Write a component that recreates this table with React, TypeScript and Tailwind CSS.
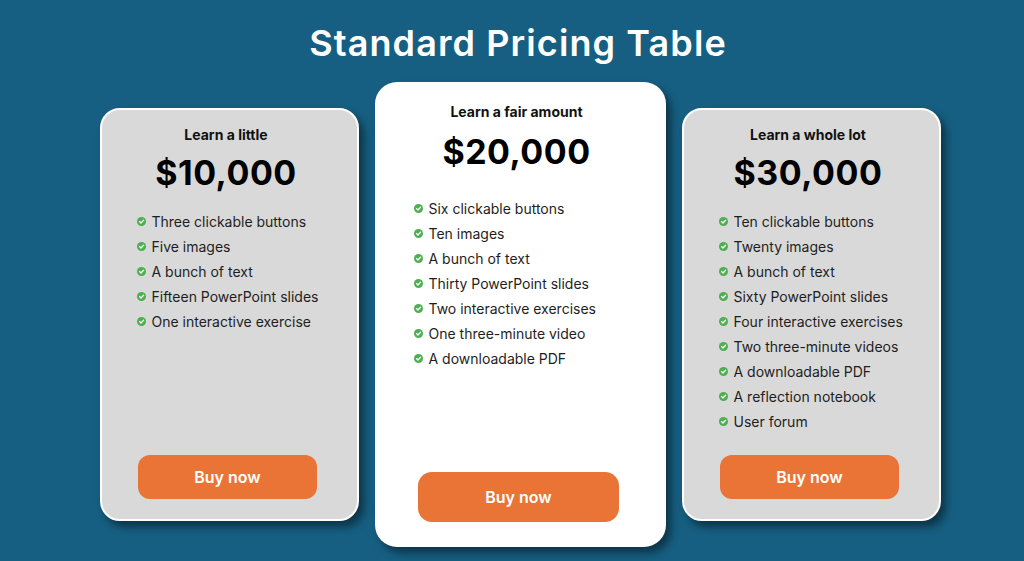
import React from "react";

const font = { fontFamily: "Inter, 'Noto Sans', sans-serif" };

function Check() {
  return (
    <svg width="9" height="9" viewBox="0 0 10 10" className="shrink-0">
      <circle cx="5" cy="5" r="5" fill="#4caf50" />
      <path d="M2.8 5.1 L4.4 6.6 L7.3 3.6" stroke="#fff" strokeWidth="1.5" fill="none" strokeLinecap="round" strokeLinejoin="round" />
    </svg>
  );
}

type Plan = { name: string; price: string; items: string[] };

const plans: Plan[] = [
  {
    name: "Learn a little",
    price: "$10,000",
    items: ["Three clickable buttons", "Five images", "A bunch of text", "Fifteen PowerPoint slides", "One interactive exercise"],
  },
  {
    name: "Learn a fair amount",
    price: "$20,000",
    items: [
      "Six clickable buttons",
      "Ten images",
      "A bunch of text",
      "Thirty PowerPoint slides",
      "Two interactive exercises",
      "One three-minute video",
      "A downloadable PDF",
    ],
  },
  {
    name: "Learn a whole lot",
    price: "$30,000",
    items: [
      "Ten clickable buttons",
      "Twenty images",
      "A bunch of text",
      "Sixty PowerPoint slides",
      "Four interactive exercises",
      "Two three-minute videos",
      "A downloadable PDF",
      "A reflection notebook",
      "User forum",
    ],
  },
];

function List({ items }: { items: string[] }) {
  return (
    <ul className="flex flex-col gap-[7px]">
      {items.map((t) => (
        <li key={t} className="flex items-center gap-[6px] h-[18px] text-[14px] text-[#1e1e1e]">
          <Check />
          <span>{t}</span>
        </li>
      ))}
    </ul>
  );
}

export default function App() {
  return (
    <div className="w-[1024px] h-[561px] bg-[#165f82] flex flex-col items-center overflow-hidden" style={font}>
      <h1 className="mt-[21px] ml-[12px] h-[44px] text-white text-[36px] font-semibold leading-[44px] tracking-[1.1px]">
        Standard Pricing Table
      </h1>
      <div className="flex items-center mt-[17px] ml-[16px]">
        <div className="w-[259px] h-[413px] bg-[#d9d9d9] border-2 border-white rounded-[20px] shadow-[5px_6px_8px_rgba(0,0,0,0.45)] flex flex-col items-center pt-[16px] pb-[20px] pr-[6px]">
          <div className="text-[14px] font-bold text-[#111] leading-[18px]">{plans[0].name}</div>
          <div className="text-[34px] font-bold text-black leading-[40px] mt-[9px] tracking-[0.5px]">{plans[0].price}</div>
          <div className="self-start ml-[35px] mt-[19px]">
            <List items={plans[0].items} />
          </div>
          <button className="mt-auto ml-[3px] w-[179px] h-[44px] rounded-[12px] bg-[#e97435] text-white text-[16px] font-semibold">
            Buy now
          </button>
        </div>
        <div className="ml-[16px] w-[291px] h-[465px] bg-white rounded-[22px] shadow-[5px_6px_8px_rgba(0,0,0,0.45)] flex flex-col items-center pt-[21px] pb-[25px] pr-[7px]">
          <div className="text-[14px] font-bold text-[#111] leading-[18px]">{plans[1].name}</div>
          <div className="text-[34px] font-bold text-black leading-[40px] mt-[11px] tracking-[0.5px]">{plans[1].price}</div>
          <div className="self-start ml-[39px] mt-[27px]">
            <List items={plans[1].items} />
          </div>
          <button className="mt-auto ml-[4px] w-[201px] h-[50px] rounded-[14px] bg-[#e97435] text-white text-[16px] font-semibold">
            Buy now
          </button>
        </div>
        <div className="ml-[16px] w-[259px] h-[413px] bg-[#d9d9d9] border-2 border-white rounded-[20px] shadow-[5px_6px_8px_rgba(0,0,0,0.45)] flex flex-col items-center pt-[16px] pb-[20px] pr-[6px]">
          <div className="text-[14px] font-bold text-[#111] leading-[18px]">{plans[2].name}</div>
          <div className="text-[34px] font-bold text-black leading-[40px] mt-[9px] tracking-[0.5px]">{plans[2].price}</div>
          <div className="self-start ml-[35px] mt-[19px]">
            <List items={plans[2].items} />
          </div>
          <button className="mt-auto ml-[3px] w-[179px] h-[44px] rounded-[12px] bg-[#e97435] text-white text-[16px] font-semibold">
            Buy now
          </button>
        </div>
      </div>
    </div>
  );
}
